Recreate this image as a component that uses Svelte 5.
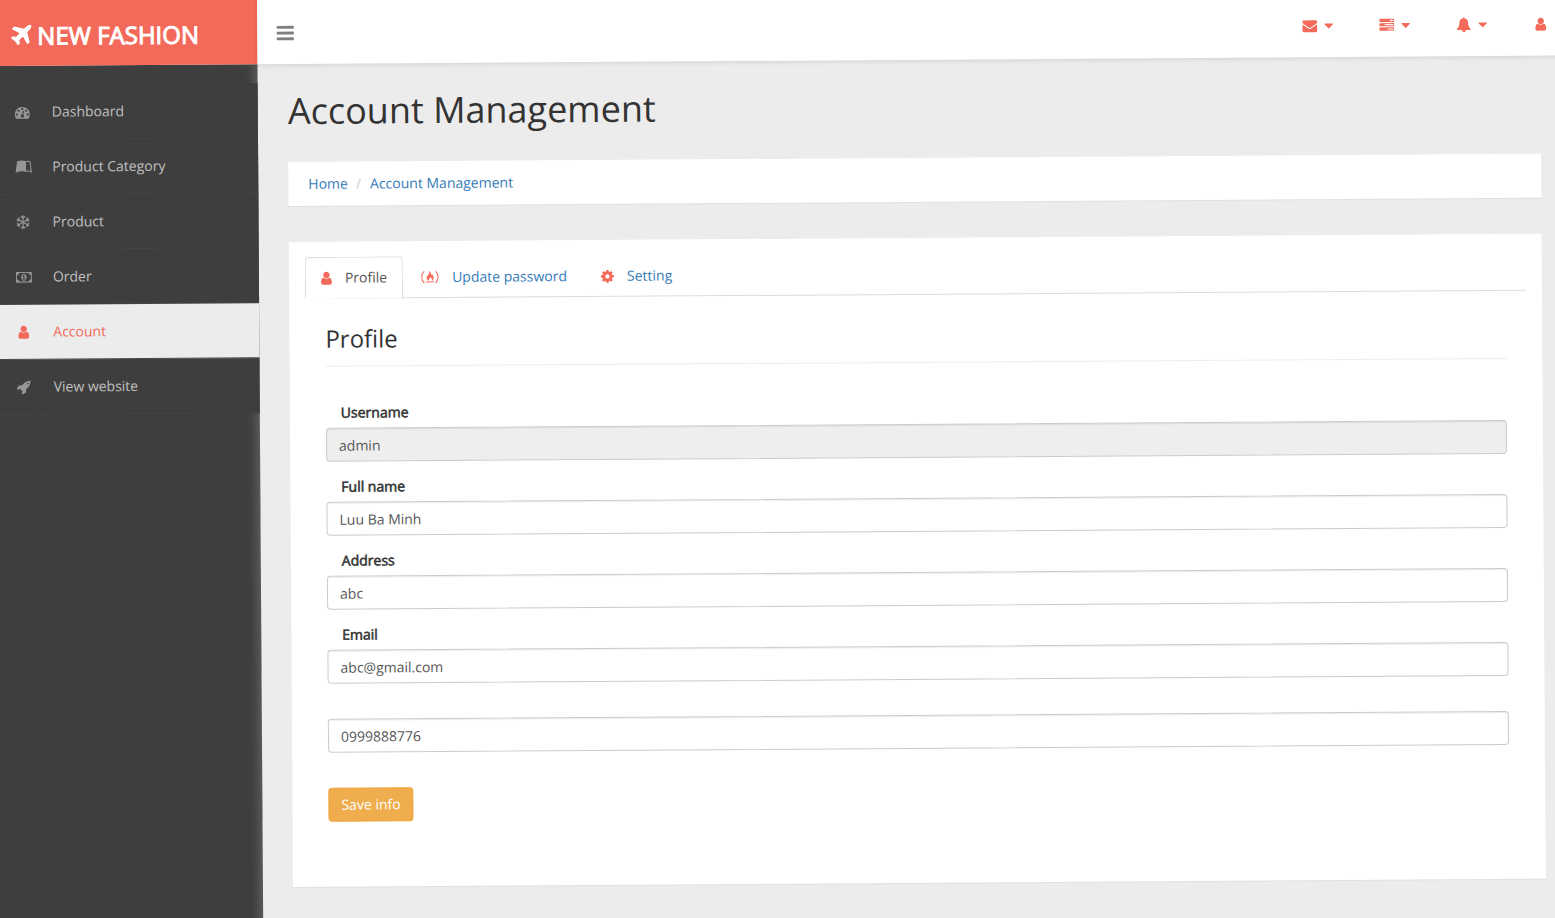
<script>
  const icons = {
    plane: 'M1568 160q44 52 12 148t-108 172l-161 161 160 696q5 19-12 33l-128 96q-7 6-19 6-4 0-7-1-15-3-21-16l-279-508-259 259 53 194q5 17-8 31l-96 96q-9 9-23 9h-2q-15-2-24-13l-189-252-252-189q-11-7-13-23-1-13 9-25l96-97q9-9 23-9 6 0 8 1l194 53 259-259-508-279q-14-8-17-24-2-16 9-27l128-128q14-13 30-8l665 159 160-160q76-76 172-108t148 12z',
    bars: 'M1664 1344v128q0 26-19 45t-45 19h-1408q-26 0-45-19t-19-45v-128q0-26 19-45t45-19h1408q26 0 45 19t19 45zm0-512v128q0 26-19 45t-45 19h-1408q-26 0-45-19t-19-45v-128q0-26 19-45t45-19h1408q26 0 45 19t19 45zm0-512v128q0 26-19 45t-45 19h-1408q-26 0-45-19t-19-45v-128q0-26 19-45t45-19h1408q26 0 45 19t19 45z',
    user: 'M1536 1399q0 109-62.5 187t-150.5 78h-854q-88 0-150.5-78t-62.5-187q0-85 8.5-160.5t31.5-152 58.5-131 94-89 134.5-34.5q131 128 313 128t313-128q76 0 134.5 34.5t94 89 58.5 131 31.5 152 8.5 160.5zm-256-887q0 159-112.5 271.5t-271.5 112.5-271.5-112.5-112.5-271.5 112.5-271.5 271.5-112.5 271.5 112.5 112.5 271.5z',
    envelope: 'M1792 710v794q0 66-47 113t-113 47h-1472q-66 0-113-47t-47-113v-794q44 49 101 87 362 246 497 345 57 42 92.5 65.5t94.5 48 110 24.5h2q51 0 110-24.5t94.5-48 92.5-65.5q170-123 498-345 57-39 100-87zm0-294q0 79-49 151t-122 123q-376 261-468 325-10 7-42.5 31t-54 38.5-52 32.5-57.5 27-50 9h-2q-23 0-50-9t-57.5-27-52-32.5-54-38.5-42.5-31q-91-64-262-182.5t-205-142.5q-62-42-117-115.5t-55-136.5q0-78 41.5-130t118.5-52h1472q65 0 112.5 47t47.5 113z',
    bell: 'M912 1696q0-16-16-16-59 0-101.5-42.5t-42.5-101.5q0-16-16-16t-16 16q0 73 51.5 124.5t124.5 51.5q16 0 16-16zm816-288q0 52-38 90t-90 38h-448q0 106-75 181t-181 75-181-75-75-181h-448q-52 0-90-38t-38-90q50-42 91-88t85-119.5 74.5-158.5 50-206 19.5-260q0-152 117-282.5t307-158.5q-8-19-8-39 0-40 28-68t68-28 68 28 28 68q0 20-8 39 190 28 307 158.5t117 282.5q0 139 19.5 260t50 206 74.5 158.5 85 119.5 91 88z',
    tasks: 'M1024 1408h640v-128h-640v128zm-384-512h1024v-128h-1024v128zm640-512h384v-128h-384v128zm512 832v256q0 26-19 45t-45 19h-1664q-26 0-45-19t-19-45v-256q0-26 19-45t45-19h1664q26 0 45 19t19 45zm0-512v256q0 26-19 45t-45 19h-1664q-26 0-45-19t-19-45v-256q0-26 19-45t45-19h1664q26 0 45 19t19 45zm0-512v256q0 26-19 45t-45 19h-1664q-26 0-45-19t-19-45v-256q0-26 19-45t45-19h1664q26 0 45 19t19 45z',
    cog: 'M1152 896q0-106-75-181t-181-75-181 75-75 181 75 181 181 75 181-75 75-181zm512-109v222q0 12-8 23t-20 13l-185 28q-19 54-39 91 35 50 107 138 10 12 10 25t-9 23q-27 37-99 108t-94 71q-12 0-26-9l-138-108q-44 23-91 38-16 136-29 186-7 28-36 28h-222q-14 0-24.5-8.5t-11.5-21.5l-28-184q-49-16-90-37l-141 107q-10 9-25 9-14 0-25-11-126-114-165-168-7-10-7-23 0-12 8-23 15-21 51-66.5t54-70.5q-27-50-41-99l-183-27q-13-2-21-12.5t-8-23.5v-222q0-12 8-23t19-13l186-28q14-46 39-92-40-57-107-138-10-12-10-24 0-10 9-23 26-36 98.5-107.5t94.5-71.5q13 0 26 10l138 107q44-23 91-38 16-136 29-186 7-28 36-28h222q14 0 24.5 8.5t11.5 21.5l28 184q49 16 90 37l142-107q9-9 24-9 13 0 25 10 129 119 165 170 7 8 7 22 0 12-8 23-15 21-51 66.5t-54 70.5q26 50 41 98l183 28q13 2 21 12.5t8 23.5z',
    caret: 'M1408 704q0 26-19 45l-448 448q-19 19-45 19t-45-19l-448-448q-19-19-19-45t19-45 45-19h896q26 0 45 19t19 45z',
    rocket: 'M1440 448q0-40-28-68t-68-28-68 28-28 68 28 68 68 28 68-28 28-68zm224-288q0 249-75.5 430.5t-253.5 360.5q-81 80-195 176l-20 379q-2 16-16 26l-384 224q-7 4-16 4-12 0-23-9l-64-64q-13-14-8-32l85-276-281-281-276 85q-3 1-9 1-14 0-23-9l-64-64q-17-19-5-39l224-384q10-14 26-16l379-20q96-114 176-195 188-187 358-258t431-71q14 0 24 9.5t10 22.5z',
    gauge: 'M384 1152q0-53-37.5-90.5t-90.5-37.5-90.5 37.5-37.5 90.5 37.5 90.5 90.5 37.5 90.5-37.5 37.5-90.5zm192-448q0-53-37.5-90.5t-90.5-37.5-90.5 37.5-37.5 90.5 37.5 90.5 90.5 37.5 90.5-37.5 37.5-90.5zm428 481l101-382q6-26-7.5-48.5t-38.5-29.5-48 6.5-30 39.5l-101 382q-60 5-107 43.5t-63 98.5q-20 77 20 146t117 89 146-20 89-117q16-60-6-117t-72-91zm660-33q0-53-37.5-90.5t-90.5-37.5-90.5 37.5-37.5 90.5 37.5 90.5 90.5 37.5 90.5-37.5 37.5-90.5zm-640-640q0-53-37.5-90.5t-90.5-37.5-90.5 37.5-37.5 90.5 37.5 90.5 90.5 37.5 90.5-37.5 37.5-90.5zm448 192q0-53-37.5-90.5t-90.5-37.5-90.5 37.5-37.5 90.5 37.5 90.5 90.5 37.5 90.5-37.5 37.5-90.5zm320 448q0 261-141 483-19 29-54 29h-1402q-35 0-54-29-141-221-141-483 0-182 71-348t191-286 286-191 348-71 348 71 286 191 191 286 71 348z',
    money: 'M768 1152h384v-96h-128v-448h-114l-148 137 77 80q42-37 55-57h2v288h-128v96zm512-256q0 70-21 142t-59.5 134-101.5 101-138 39-138-39-101.5-101-59.5-134-21-142 21-142 59.5-134 101.5-101 138-39 138 39 101.5 101 59.5 134 21 142zm512 256v-512q-106 0-181-75t-75-181h-1152q0 106-75 181t-181 75v512q106 0 181 75t75 181h1152q0-106 75-181t181-75zm128-832v1152q0 26-19 45t-45 19h-1792q-26 0-45-19t-19-45v-1152q0-26 19-45t45-19h1792q26 0 45 19t19 45z'
  };

  const menu = [
    { label: 'Dashboard', icon: 'gauge' },
    { label: 'Product Category', icon: 'book' },
    { label: 'Product', icon: 'snow' },
    { label: 'Order', icon: 'money' },
    { label: 'Account', icon: 'user', active: true },
    { label: 'View website', icon: 'rocket' }
  ];

  const notices = [
    { label: 'Messages', icon: 'envelope' },
    { label: 'Tasks', icon: 'tasks' },
    { label: 'Alerts', icon: 'bell' }
  ];

  const tabs = [
    { label: 'Profile', icon: 'user', w: 11, active: true },
    { label: 'Update password', icon: 'camp', w: 18 },
    { label: 'Setting', icon: 'cog', w: 13 }
  ];

  let fields = $state([
    { id: 'username', label: 'Username', value: 'admin', disabled: true },
    { id: 'fullname', label: 'Full name', value: 'Luu Ba Minh' },
    { id: 'address', label: 'Address', value: 'abc' },
    { id: 'email', label: 'Email', value: 'abc@gmail.com' }
  ]);
  let phone = $state('0999888776');
</script>

{#snippet icon(name, size)}
  {#if name === 'snow'}
    <svg width={size} height={size} viewBox="0 0 14 14" aria-hidden="true" fill="none" stroke="currentColor" stroke-width="1.1">
      {#each [0, 60, 120, 180, 240, 300] as angle}
        <path d="M7 7V0.4M5 1.4L7 3.2L9 1.4" transform="rotate({angle} 7 7)" />
      {/each}
    </svg>
  {:else if name === 'book'}
    <svg width="17" height="14" viewBox="0 0 17 14" aria-hidden="true" fill="none" stroke="currentColor">
      <path d="M2.4 2C4.5 1.2 8 1 10.4 2V11.4C7.6 10.8 3.6 11 1 12.2Z" fill="currentColor" />
      <path d="M10.4 2C11.8 1.3 13.4 1.4 14.8 2L16.2 12.2C14.2 11.2 12.2 10.9 10.4 11.4" />
    </svg>
  {:else if name === 'camp'}
    <svg width="18" height="14" viewBox="0 0 18 14" aria-hidden="true">
      <path d="M3.4 1C0 4 0 10 3.4 13M14.6 1C18 4 18 10 14.6 13M5 11.8H13" fill="none" stroke="currentColor" />
      <path d="M8.2 1C10.4 2.2 10.2 4.2 10.4 5.2C10.9 4.8 11 4.4 11 3.8C13.4 6.4 13.2 9.2 11 10.6C11.2 9 10.4 8 9.4 7C9.4 8.4 7.4 8.8 7.8 10.6C5 9.2 5.2 6.6 7.2 4.8C8.4 3.6 8.6 2.4 8.2 1Z" fill="currentColor" />
    </svg>
  {:else}
    <svg width={name === 'money' ? 16 : size} height={size} viewBox={name === 'money' ? '0 0 1920 1792' : '0 0 1792 1792'} aria-hidden="true">
      <path d={icons[name]} fill="currentColor" />
    </svg>
  {/if}
{/snippet}

<div class="view">
  <div class="page">
    <header>
      <a class="brand" href="#home">{@render icon('plane', 26)}<span>NEW FASHION</span></a>
      <div class="bar">
        <button class="toggle" aria-label="Toggle menu">{@render icon('bars', 20)}</button>
        <div class="notices">
          {#each notices as n}
            <button class="notice" aria-label={n.label}>
              <span class="glyph">{@render icon(n.icon, 15)}</span>
              <span class="caret">{@render icon('caret', 15)}</span>
            </button>
          {/each}
          <button class="notice" aria-label="User">
            <span class="glyph">{@render icon('user', 15)}</span>
          </button>
        </div>
      </div>
    </header>

    <div class="body">
      <nav>
        {#each menu as m}
          <a class="item" class:active={m.active} href="#menu">
            <span class="mark">{@render icon(m.icon, 15)}</span>{m.label}
          </a>
        {/each}
      </nav>

      <main>
        <h1>Account Management</h1>
        <ol class="crumbs">
          <li><a href="#home">Home</a></li>
          <li><a href="#account">Account Management</a></li>
        </ol>

        <section class="card">
          <div class="tabs">
            {#each tabs as t}
              <a class="tab" class:active={t.active} href="#tab">
                <span class="mark" style="width: {t.w}px">{@render icon(t.icon, 15)}</span>{t.label}
              </a>
            {/each}
          </div>
          <form>
            <h2>Profile</h2>
            {#each fields as f}
              <div class="group">
                <label for={f.id}>{f.label}</label>
                <input id={f.id} type="text" bind:value={f.value} disabled={f.disabled} />
              </div>
            {/each}
            <div class="group phone">
              <input type="text" aria-label="Phone" bind:value={phone} />
            </div>
            <button class="save" type="button">Save info</button>
          </form>
        </section>
      </main>
    </div>
  </div>
</div>

<style>
  :global(body) {
    margin: 0;
    background: #ececec;
  }
  .view {
    min-height: 100vh;
    overflow: hidden;
    display: flow-root;
    font: 14px/20px 'Open Sans', sans-serif;
    color: #333;
  }
  .view :global(*) {
    box-sizing: border-box;
  }
  .page {
    display: flex;
    flex-direction: column;
    margin: -10px -10px -14px;
    min-height: calc(100vh + 24px);
    transform: rotate(-0.38deg);
    transform-origin: 0 0;
  }
  svg {
    display: block;
    flex: none;
  }
  a {
    color: #337ab7;
    text-decoration: none;
  }
  button {
    font: inherit;
    border: 0;
    background: none;
    padding: 0;
    cursor: pointer;
  }
  header {
    display: flex;
    height: 76px;
    position: relative;
  }
  .brand {
    width: 267px;
    flex: none;
    display: flex;
    align-items: center;
    gap: 3px;
    padding: 15px 0 0 18px;
    background: #f36a5a;
    color: #fff;
    font-size: 24px;
    line-height: 34px;
    -webkit-text-stroke: 1px #fff;
  }
  .bar {
    flex: 1;
    display: flex;
    align-items: center;
    justify-content: space-between;
    padding: 13px 0 0 18px;
    background: #fff;
    box-shadow: 0 1px 5px rgba(0, 0, 0, 0.12);
  }
  .toggle {
    color: #808080;
  }
  .notices {
    display: flex;
    gap: 45px;
    color: #f36a5a;
  }
  .notice {
    display: flex;
    align-items: center;
    gap: 4px;
    width: 32px;
    color: inherit;
  }
  .body {
    flex: 1;
    display: flex;
  }
  nav {
    width: 267px;
    flex: none;
    padding-top: 19px;
    background: #3e3e3e;
    box-shadow: inset -11px 0 11px -8px rgba(255, 255, 255, 0.2);
  }
  .item {
    display: flex;
    align-items: center;
    height: 55px;
    padding-left: 24px;
    background: #3e3e3e;
    border-bottom: 1px solid #454545;
    color: #c0c0c0;
  }
  .mark {
    display: flex;
    align-items: center;
  }
  .item .mark {
    width: 37px;
    color: #969696;
  }
  .item.active {
    background: #ececec;
    color: #f36a5a;
  }
  .item.active .mark {
    color: #f36a5a;
  }
  main {
    flex: 1;
    min-width: 0;
    padding: 22px 25px 30px 30px;
  }
  h1 {
    margin: 0 0 26px;
    font-size: 36px;
    line-height: 50px;
    font-weight: 400;
  }
  .crumbs {
    display: flex;
    margin: 0 0 36px;
    padding: 12px 20px;
    list-style: none;
    background: #fff;
    box-shadow: 0 1px 1px rgba(0, 0, 0, 0.05);
  }
  .crumbs li + li::before {
    content: '/';
    padding: 0 9px 0 8px;
    color: #ccc;
  }
  .card {
    padding: 15px 16px 65px;
    background: #fff;
    box-shadow: 0 1px 1px rgba(0, 0, 0, 0.05);
  }
  .tabs {
    display: flex;
    gap: 2px;
    border-bottom: 1px solid #ddd;
  }
  .tab {
    display: flex;
    gap: 13px;
    align-items: center;
    margin-bottom: -1px;
    padding: 10px 15px;
    border: 1px solid transparent;
    border-radius: 4px 4px 0 0;
  }
  .tab.active {
    background: #fff;
    border-color: #ddd #ddd #fff;
    color: #555;
  }
  .tab .mark {
    justify-content: center;
    color: #f36a5a;
  }
  form {
    padding: 23px 20px 0;
  }
  h2 {
    margin: 0 0 36px;
    padding-bottom: 10px;
    border-bottom: 1px solid #eee;
    font-size: 24px;
    line-height: 34px;
    font-weight: 400;
  }
  .group {
    margin-bottom: 15px;
  }
  label {
    display: block;
    margin-bottom: 5px;
    padding-left: 15px;
    -webkit-text-stroke: 0.04em #333;
  }
  input {
    display: block;
    width: 100%;
    height: 34px;
    padding: 6px 12px;
    border: 1px solid #ccc;
    border-radius: 4px;
    background: #fff;
    box-shadow: inset 0 1px 1px rgba(0, 0, 0, 0.08);
    font: inherit;
    color: #555;
  }
  input:disabled {
    background: #eee;
    opacity: 1;
  }
  .phone {
    padding-top: 20px;
    margin-bottom: 35px;
  }
  .save {
    height: 34px;
    padding: 0 12px;
    border: 1px solid #eea236;
    border-radius: 4px;
    background: #f0ad4e;
    color: #fff;
  }
</style>
